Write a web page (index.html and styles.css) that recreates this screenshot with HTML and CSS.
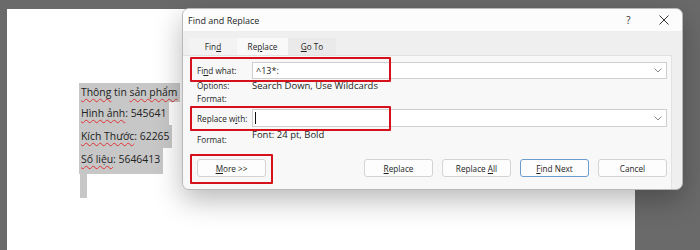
FILE: index.html
```html
<!DOCTYPE html>
<html lang="en">
<head>
    <meta charset="UTF-8">
    <meta name="viewport" content="width=device-width, initial-scale=1.0">
    <title>Find and Replace</title>
    <link rel="stylesheet" href="styles.css">
</head>
<body>

<div class="page">
    <div class="selection">
        <div class="sel-line first"><span class="typo">Thông</span> tin <span class="typo">sản phẩm</span></div>
        <div class="sel-line"><span class="typo">Hình ảnh</span>: 545641</div>
        <div class="sel-line"><span class="typo">Kích Thước</span>: 62265</div>
        <div class="sel-line last"><span class="typo">Số liệu</span>: 5646413</div>
        <div class="sel-tail"></div>
    </div>
</div>

<div class="dialog">
    <div class="titlebar">
        <span class="title">Find and Replace</span>
        <span class="title-btn help">?</span>
        <span class="title-btn close">
            <svg width="10" height="10" viewBox="0 0 10 10"><path d="M0.5 0.5 L9.5 9.5 M9.5 0.5 L0.5 9.5" stroke="#333" stroke-width="1" fill="none"/></svg>
        </span>
    </div>

    <div class="tabs">
        <div class="tab">Fin<u>d</u></div>
        <div class="tab active">Re<u>p</u>lace</div>
        <div class="tab"><u>G</u>o To</div>
    </div>

    <div class="panel">
        <div class="field-row">
            <label class="label">Fi<u>n</u>d what:</label>
            <div class="input">
                <span class="input-text">^13*:</span>
                <svg class="chev" width="8" height="5" viewBox="0 0 8 5"><path d="M0.5 0.5 L4 4 L7.5 0.5" stroke="#888" stroke-width="1" fill="none"/></svg>
            </div>
        </div>
        <div class="info-row">
            <span class="label">Options:</span>
            <span class="value">Search Down, Use Wildcards</span>
        </div>
        <div class="info-row">
            <span class="label">Format:</span>
            <span class="value"></span>
        </div>

        <div class="field-row replace">
            <label class="label">Replace w<u>i</u>th:</label>
            <div class="input">
                <span class="caret"></span>
                <svg class="chev" width="8" height="5" viewBox="0 0 8 5"><path d="M0.5 0.5 L4 4 L7.5 0.5" stroke="#888" stroke-width="1" fill="none"/></svg>
            </div>
        </div>
        <div class="format-row">
            <span class="label">Format:</span>
            <span class="value">Font: 24 pt, Bold</span>
        </div>

        <div class="buttons">
            <button class="btn"><u>M</u>ore &gt;&gt;</button>
            <div class="spacer"></div>
            <button class="btn"><u>R</u>eplace</button>
            <button class="btn">Replace <u>A</u>ll</button>
            <button class="btn primary"><u>F</u>ind Next</button>
            <button class="btn">Cancel</button>
        </div>

        <div class="mark mark-find"></div>
        <div class="mark mark-replace"></div>
        <div class="mark mark-more"></div>
    </div>
</div>

</body>
</html>
```

FILE: styles.css
```css
body {
    margin: 0;
    width: 700px;
    height: 250px;
    overflow: hidden;
    background-color: #6a6a6a;
    font-family: "Open Sans", "Noto Sans", sans-serif;
    position: relative;
}
.page {
    margin: 9px 0 0 7px;
    width: 628px;
    height: 241px;
    background-color: #fff;
    padding: 74px 0 0 72px;
    box-sizing: border-box;
}
.selection {
    font-family: "Open Sans", sans-serif;
    font-size: 10.4px;
    color: #222;
}
.sel-line {
    width: fit-content;
    background-color: #c7c7c7;
    height: 23px;
    line-height: 23px;
    padding: 0 3px 0 2px;
    white-space: nowrap;
}
.sel-line.first {
    height: 19px;
    line-height: 19px;
}
.sel-line.last {
    height: 26px;
}
.typo {
    text-decoration: underline wavy #d33;
    text-decoration-thickness: 1px;
    text-underline-offset: 2px;
}
.sel-tail {
    width: 7px;
    height: 24px;
    margin-left: 1px;
    background-color: #c7c7c7;
}

.dialog {
    position: absolute;
    left: 182px;
    top: 8px;
    width: 501px;
    height: 182px;
    box-sizing: border-box;
    border: 1px solid #b9b9b9;
    border-radius: 7px;
    background-color: #efefef;
    box-shadow: 0 10px 28px rgba(0, 0, 0, 0.28);
    overflow: hidden;
    display: flex;
    flex-direction: column;
    font-size: 8.2px;
    color: #1e1e1e;
}
.titlebar {
    height: 22px;
    background-color: #fcfcfc;
    display: flex;
    align-items: center;
    padding-left: 5px;
}
.title {
    font-size: 9px;
    flex: 1;
}
.title-btn {
    width: 35px;
    text-align: center;
    font-size: 10px;
    color: #333;
}
.title-btn.close {
    display: flex;
    justify-content: center;
    margin-right: 1px;
}
.tabs {
    display: flex;
    padding: 7px 0 0 6px;
    height: 17px;
}
.tab {
    width: 48px;
    text-align: center;
    line-height: 17px;
    background-color: #f3f3f3;
}
.tab.active {
    width: 51px;
    background-color: #f9f9f9;
}
.tab:last-child {
    background-color: #eaeaea;
}
.panel {
    flex: 1;
    position: relative;
    background-color: #f8f8f8;
    border-top: 1px solid #e2e2e2;
    border-right: 1px solid #e2e2e2;
    margin-right: 10px;
    padding: 6px 4px 0 14px;
}
.field-row {
    display: flex;
    align-items: center;
    height: 17px;
}
.field-row.replace {
    margin-top: 4px;
    height: 18px;
}
.label {
    width: 55px;
    flex: none;
}
.value {
    font-size: 9.5px;
}
.input {
    flex: 1;
    height: 100%;
    box-sizing: border-box;
    border: 1px solid #cfcfcf;
    background-color: #fff;
    display: flex;
    align-items: center;
    padding: 0 4px 0 3px;
    font-size: 9px;
}
.input-text {
    flex: 1;
}
.caret {
    width: 1px;
    height: 12px;
    background-color: #111;
    margin-left: -1px;
    flex: none;
}
.chev {
    margin-left: auto;
}
.info-row {
    display: flex;
    align-items: center;
    height: 13px;
}
.format-row {
    display: flex;
    align-items: flex-start;
    margin-top: 1px;
    line-height: 13px;
}
.format-row .label {
    padding-top: 5px;
}
.buttons {
    display: flex;
    gap: 9px;
    margin-top: 13px;
}
.spacer {
    flex: 1;
}
.btn {
    width: 69px;
    height: 18px;
    padding: 0;
    font-family: inherit;
    font-size: 8.2px;
    color: #1e1e1e;
    background-color: #fdfdfd;
    border: 1px solid #d3d3d3;
    border-radius: 3px;
}
.btn.primary {
    border-color: #6e9ccf;
}
.mark {
    position: absolute;
    border: 2px solid #d5121c;
    border-radius: 1px;
}
.mark-find {
    left: 7px;
    top: 1px;
    width: 197px;
    height: 21px;
}
.mark-replace {
    left: 7px;
    top: 50px;
    width: 197px;
    height: 21px;
}
.mark-more {
    left: 7px;
    top: 98px;
    width: 79px;
    height: 26px;
}
```
